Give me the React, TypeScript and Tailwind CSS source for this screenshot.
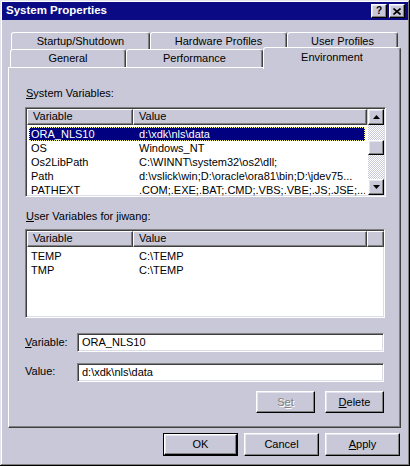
import React from 'react';

// ---------------------------------------------------------------------------
// Shared 3D styles (classic Windows look)
// ---------------------------------------------------------------------------

const raised =
  'border border-t-white border-l-white border-r-black border-b-black shadow-[inset_-1px_-1px_#808080,inset_1px_1px_#e4e4ee]';
const sunken =
  'border border-t-[#808080] border-l-[#808080] border-r-white border-b-white shadow-[inset_1px_1px_#404040,inset_-1px_-1px_#dcdce6]';
const headerCell =
  'h-full border border-t-white border-l-white border-r-[#404040] border-b-[#404040] shadow-[inset_-1px_-1px_#808080] pl-[5px] leading-[13px] truncate';

function Arrow({ down }: { down?: boolean }) {
  return (
    <svg width="7" height="4" viewBox="0 0 7 4" aria-hidden>
      <path d={down ? 'M0 0h7L3.5 4z' : 'M0 4h7L3.5 0z'} fill="#000" />
    </svg>
  );
}

// ---------------------------------------------------------------------------
// Tabs
// ---------------------------------------------------------------------------

function Tab({ label, className }: { label: string; className: string }) {
  return (
    <div
      className={
        'flex items-center justify-center rounded-t-[3px] border-t border-l border-r border-t-white border-l-white border-r-[#404040] shadow-[inset_-1px_0_#808080] bg-[#c8c8d8] ' +
        className
      }
    >
      {label}
    </div>
  );
}

// ---------------------------------------------------------------------------
// List view
// ---------------------------------------------------------------------------

type Row = { name: string; value: string; selected?: boolean };

function ListView({
  rows,
  scroll,
  className,
}: {
  rows: Row[];
  scroll?: boolean;
  className: string;
}) {
  return (
    <div className={'flex bg-white overflow-hidden ' + sunken + ' ' + className}>
      <div className="flex flex-col flex-1 min-w-0 ml-[1px] mt-[1px]">
        <div className="flex h-[16px] bg-[#c8c8d8] shrink-0">
          <div className={'w-[106px] shrink-0 ' + headerCell}>Variable</div>
          <div className={'w-[234px] shrink-0 ' + headerCell}>Value</div>
          {!scroll && <div className={'flex-1 ' + headerCell} />}
        </div>
        <div className="flex flex-col pt-[2px]">
          {rows.map((r) => (
            <div
              key={r.name}
              className={
                'flex h-[14px] leading-[14px] ml-[2px] w-[336px] shrink-0 whitespace-nowrap ' +
                (r.selected
                  ? 'bg-[#000080] text-white outline-1 outline-dotted outline-[#ffff80] -outline-offset-1'
                  : 'text-black')
              }
            >
              <div className="w-[104px] shrink-0 pl-[2px] overflow-hidden">{r.name}</div>
              <div className="flex-1 pl-[6px] overflow-hidden">{r.value}</div>
            </div>
          ))}
        </div>
      </div>
      {scroll && (
        <div className="flex flex-col w-[16px] shrink-0 mt-[1px] mr-[1px] mb-[1px]">
          <div className={'h-[16px] shrink-0 flex items-center justify-center bg-[#c8c8d8] ' + raised}>
            <Arrow />
          </div>
          <div className="flex-1 bg-[image:repeating-conic-gradient(#ffffff_0_25%,#c8c8d8_0_50%)] bg-size-[2px_2px]">
            <div className={'mt-[15px] h-[15px] bg-[#c8c8d8] ' + raised} />
          </div>
          <div className={'h-[16px] shrink-0 flex items-center justify-center bg-[#c8c8d8] ' + raised}>
            <Arrow down />
          </div>
        </div>
      )}
    </div>
  );
}

// ---------------------------------------------------------------------------
// Dialog
// ---------------------------------------------------------------------------

const systemRows: Row[] = [
  { name: 'ORA_NLS10', value: 'd:\\xdk\\nls\\data', selected: true },
  { name: 'OS', value: 'Windows_NT' },
  { name: 'Os2LibPath', value: 'C:\\WINNT\\system32\\os2\\dll;' },
  { name: 'Path', value: 'd:\\vslick\\win;D:\\oracle\\ora81\\bin;D:\\jdev75...' },
  { name: 'PATHEXT', value: '.COM;.EXE;.BAT;.CMD;.VBS;.VBE;.JS;.JSE;...' },
];

const userRows: Row[] = [
  { name: 'TEMP', value: 'C:\\TEMP' },
  { name: 'TMP', value: 'C:\\TEMP' },
];

export default function App() {
  return (
    <div className="w-[410px] h-[466px] p-[2px] flex flex-col bg-[#c8c8d8] text-[11px] text-black font-['Liberation_Sans',Arial,sans-serif] shadow-[inset_-1px_-1px_#000,inset_1px_1px_#e4e4ee,inset_-2px_-2px_#808080,inset_2px_2px_#fff] overflow-hidden">
      {/* Title bar */}
      <div className="h-[18px] shrink-0 flex items-center bg-[#0a0a84] pl-[4px] pr-[3px]">
        <span className="flex-1 text-white font-bold text-[11.5px] leading-none">System Properties</span>
        <div className={'w-[16px] h-[14px] flex items-center justify-center bg-[#c8c8d8] ' + raised}>
          <span className="font-bold text-[10px] leading-none">?</span>
        </div>
        <div className={'ml-[2px] w-[16px] h-[14px] flex items-center justify-center bg-[#c8c8d8] ' + raised}>
          <svg width="8" height="7" viewBox="0 0 8 7" aria-hidden>
            <path d="M0.5 0.5L7.5 6.5M7.5 0.5L0.5 6.5" stroke="#000" strokeWidth="1.6" />
          </svg>
        </div>
      </div>

      {/* Tabs, back row */}
      <div className="flex h-[17px] mt-[12px] pl-[9px] shrink-0">
        <Tab label="Startup/Shutdown" className="w-[139px]" />
        <Tab label="Hardware Profiles" className="w-[137px]" />
        <Tab label="User Profiles" className="w-[111px]" />
      </div>

      {/* Tabs, front row */}
      <div className="relative z-10 flex items-end h-[20px] -mb-[2px] pl-[8px] shrink-0">
        <Tab label="General" className="w-[116px] h-[18px] mb-[2px]" />
        <Tab label="Performance" className="w-[137px] h-[18px] mb-[2px]" />
        <Tab label="Environment" className="w-[138px] h-[22px] pb-[3px]" />
      </div>

      {/* Panel */}
      <div className="ml-[6px] w-[393px] h-[361px] shrink-0 flex flex-col pl-[16px] pt-[19px] border border-t-white border-l-white border-r-[#404040] border-b-[#404040] shadow-[inset_-1px_-1px_#808080]">
        <div className="ml-[1px] h-[13px] leading-[13px]">
          <u>S</u>ystem Variables:
        </div>
        <ListView rows={systemRows} scroll className="mt-[7px] w-[361px] h-[90px] shrink-0" />

        <div className="mt-[13px] ml-[1px] h-[13px] leading-[13px]">
          <u>U</u>ser Variables for jiwang:
        </div>
        <ListView rows={userRows} className="mt-[6px] w-[360px] h-[89px] shrink-0" />

        <div className="mt-[15px] flex items-center h-[19px]">
          <div className="w-[52px]">
            <u>V</u>ariable:
          </div>
          <div className={'w-[307px] h-[19px] bg-white pl-[4px] leading-[17px] ' + sunken}>ORA_NLS10</div>
        </div>
        <div className="mt-[11px] flex items-center h-[19px]">
          <div className="w-[52px] -mt-[3px]">Value:</div>
          <div className={'w-[307px] h-[19px] bg-white pl-[4px] leading-[17px] ' + sunken}>d:\xdk\nls\data</div>
        </div>

        <div className="mt-[9px] w-[359px] flex justify-end gap-[10px]">
          <div className={'w-[59px] h-[22px] flex items-center justify-center text-[#808080] [text-shadow:1px_1px_0_#fff] ' + raised}>
            S<u>e</u>t
          </div>
          <div className={'w-[59px] h-[22px] flex items-center justify-center ' + raised}>
            <u>D</u>elete
          </div>
        </div>
      </div>

      {/* Dialog buttons */}
      <div className="mt-[5px] mr-[8px] flex justify-end gap-[6px]">
        <div className="w-[75px] h-[23px] border border-black">
          <div className={'w-full h-full flex items-center justify-center ' + raised}>OK</div>
        </div>
        <div className={'w-[75px] h-[23px] flex items-center justify-center ' + raised}>Cancel</div>
        <div className={'w-[75px] h-[23px] flex items-center justify-center ' + raised}>
          <u>A</u>pply
        </div>
      </div>
    </div>
  );
}
